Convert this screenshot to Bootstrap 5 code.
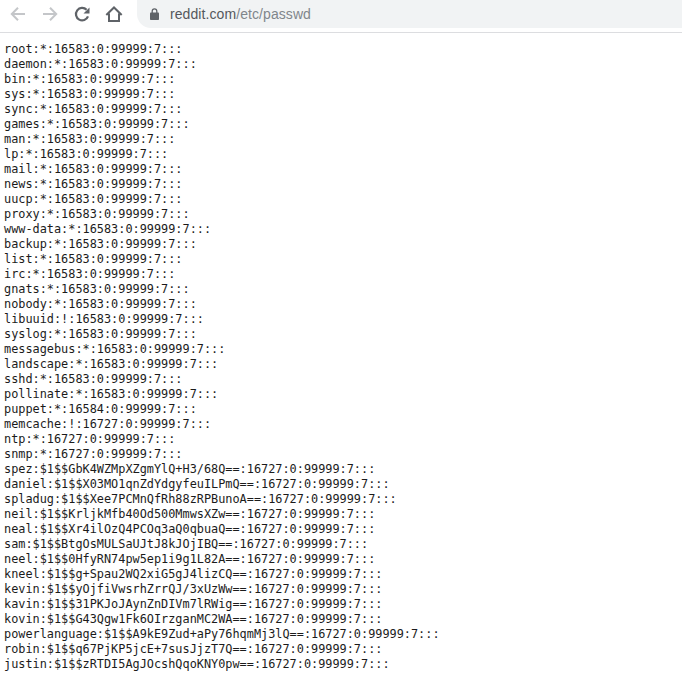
<!DOCTYPE html>
<html lang="en">
<head>
<meta charset="utf-8">
<title>reddit.com/etc/passwd</title>
<link href="https://cdn.jsdelivr.net/npm/bootstrap@5.3.0/dist/css/bootstrap.min.css" rel="stylesheet">
<style>
html,body{background:#fff;height:691px;overflow:hidden}
.chrome-bar{height:33px;border-bottom:1px solid #dcdde0;padding-left:8px}
.tool{width:20px;height:20px;flex:none;display:block;margin-top:4px}
.tool-gap-a{margin-right:12px}
.tool-gap-b{margin-right:12px}
.tool-gap-c{margin-right:12px}
.tool-gap-d{margin-right:13px}
.omni{height:28px;background:#f1f3f4;border-radius:0 0 0 14px;padding-left:13px;font:14px/1 "Liberation Sans",Arial,sans-serif;color:#80868b;letter-spacing:.08px}
.omni-host{color:#55585c}
.lock{width:9px;height:12px;margin-right:11px;flex:none}
.passwd{margin:9px 0 0 4px;font:11.87px/15px "DejaVu Sans Mono",monospace;color:#1b1b1b;overflow:visible}
</style>
</head>
<body>
<div class="chrome-bar d-flex align-items-start">
<svg class="tool tool-gap-a" viewBox="0 0 20 20" fill="none" stroke="#c4c6c9" stroke-width="2"><path d="M17 10H4.500M10 3.800l-6.200 6.200 6.200 6.200"/></svg>
<svg class="tool tool-gap-b" viewBox="0 0 20 20" fill="none" stroke="#c4c6c9" stroke-width="2"><path d="M3 10h12.500M10 3.800l6.200 6.200-6.200 6.200"/></svg>
<svg class="tool tool-gap-c" viewBox="0 0 20 20" fill="none" stroke="#5f6368" stroke-width="2.200"><path d="M16 12.300A6.200 6.200 0 1 1 14.600 5.800"/><path d="M17.500 3.500v6h-6z" fill="#5f6368" stroke="none"/></svg>
<svg class="tool tool-gap-d" viewBox="0 0 20 20" fill="none" stroke="#5f6368" stroke-width="2"><path d="M2.300 11 10 3.500l7.700 7.500M5 9.500v7.500h10V9.500"/></svg>
<div class="omni flex-grow-1 d-flex align-items-center">
<svg class="lock" viewBox="0 0 9 12"><path d="M2.200 5V3.200a2.300 2.300 0 0 1 4.600 0V5" fill="none" stroke="#5f6368" stroke-width="1.300"/><rect x="0" y="4.500" width="9" height="7.500" rx=".8" fill="#5f6368"/></svg>
<span><span class="omni-host">reddit.com</span>/etc/passwd</span>
</div>
</div>
<pre class="passwd">root:*:16583:0:99999:7:::
daemon:*:16583:0:99999:7:::
bin:*:16583:0:99999:7:::
sys:*:16583:0:99999:7:::
sync:*:16583:0:99999:7:::
games:*:16583:0:99999:7:::
man:*:16583:0:99999:7:::
lp:*:16583:0:99999:7:::
mail:*:16583:0:99999:7:::
news:*:16583:0:99999:7:::
uucp:*:16583:0:99999:7:::
proxy:*:16583:0:99999:7:::
www-data:*:16583:0:99999:7:::
backup:*:16583:0:99999:7:::
list:*:16583:0:99999:7:::
irc:*:16583:0:99999:7:::
gnats:*:16583:0:99999:7:::
nobody:*:16583:0:99999:7:::
libuuid:!:16583:0:99999:7:::
syslog:*:16583:0:99999:7:::
messagebus:*:16583:0:99999:7:::
landscape:*:16583:0:99999:7:::
sshd:*:16583:0:99999:7:::
pollinate:*:16583:0:99999:7:::
puppet:*:16584:0:99999:7:::
memcache:!:16727:0:99999:7:::
ntp:*:16727:0:99999:7:::
snmp:*:16727:0:99999:7:::
spez:$1$$GbK4WZMpXZgmYlQ+H3/68Q==:16727:0:99999:7:::
daniel:$1$$X03MO1qnZdYdgyfeuILPmQ==:16727:0:99999:7:::
spladug:$1$$Xee7PCMnQfRh88zRPBunoA==:16727:0:99999:7:::
neil:$1$$KrljkMfb40Od500MmwsXZw==:16727:0:99999:7:::
neal:$1$$Xr4ilOzQ4PCOq3aQ0qbuaQ==:16727:0:99999:7:::
sam:$1$$BtgOsMULSaUJtJ8kJOjIBQ==:16727:0:99999:7:::
neel:$1$$0HfyRN74pw5ep1i9g1L82A==:16727:0:99999:7:::
kneel:$1$$g+Spau2WQ2xiG5gJ4lizCQ==:16727:0:99999:7:::
kevin:$1$$yOjfiVwsrhZrrQJ/3xUzWw==:16727:0:99999:7:::
kavin:$1$$31PKJoJAynZnDIVm7lRWig==:16727:0:99999:7:::
kovin:$1$$G43Qgw1Fk6OIrzganMC2WA==:16727:0:99999:7:::
powerlanguage:$1$$A9kE9Zud+aPy76hqmMj3lQ==:16727:0:99999:7:::
robin:$1$$q67PjKP5jcE+7susJjzT7Q==:16727:0:99999:7:::
justin:$1$$zRTDI5AgJOcshQqoKNY0pw==:16727:0:99999:7:::</pre>
<script src="https://cdn.jsdelivr.net/npm/bootstrap@5.3.0/dist/js/bootstrap.bundle.min.js"></script>
</body>
</html>
